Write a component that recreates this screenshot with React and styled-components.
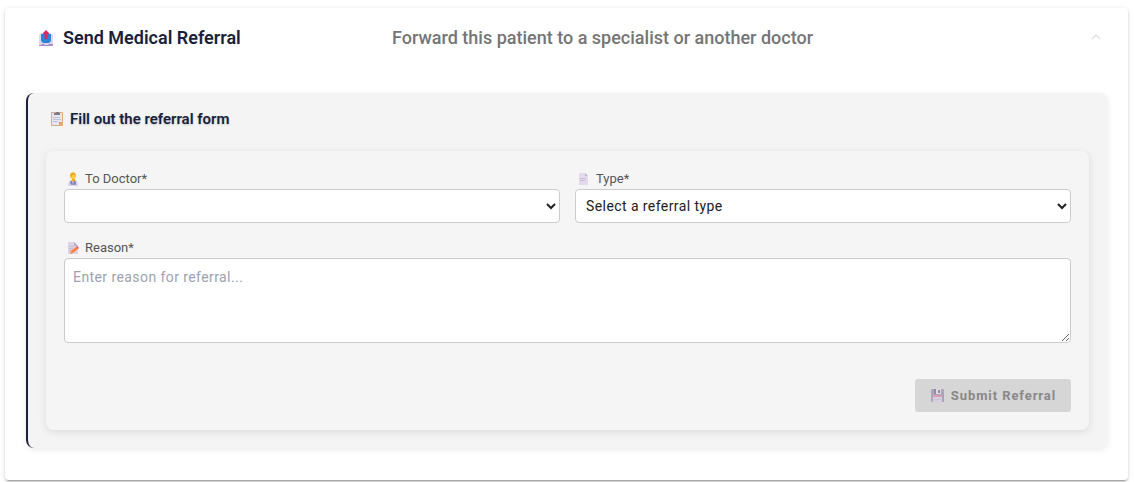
import React, { useState } from "react";
import styled, { createGlobalStyle } from "styled-components";

const GlobalStyle = createGlobalStyle`
  *, *::before, *::after { box-sizing: border-box; }
  body {
    margin: 0;
    background: #fff;
    font-family: Roboto, "Liberation Sans", sans-serif;
  }
`;

const Page = styled.main`
  padding: 8px 6px 2px 5px;
`;

const Panel = styled.section`
  background: #fff;
  border-radius: 4px;
  padding-bottom: 32px;
  box-shadow: 0 3px 1px -2px rgba(0, 0, 0, 0.2), 0 2px 2px rgba(0, 0, 0, 0.14),
    0 1px 5px rgba(0, 0, 0, 0.12);
`;

const PanelHeader = styled.header`
  display: grid;
  grid-template-columns: 354px 1fr auto;
  align-items: center;
  height: 60px;
  padding: 0 27px 0 33px;
`;

const PanelTitle = styled.h1`
  display: flex;
  align-items: center;
  gap: 9px;
  margin: 0;
  font-size: 18px;
  line-height: 24px;
  font-weight: 600;
  color: #1a1f3c;
`;

const PanelDescription = styled.p`
  margin: 0;
  font-size: 18px;
  line-height: 24px;
  font-weight: 500;
  color: #757575;
`;

const Toggle = styled.button`
  display: flex;
  padding: 0;
  border: 0;
  background: none;
  cursor: pointer;
`;

const Section = styled.section`
  margin: 25px 20px 0 21px;
  padding: 16px 19px 18px 18px;
  background: #f4f4f4;
  border-left: 2px solid #1a1f3c;
  border-radius: 8px;
  box-shadow: 0 2px 6px rgba(0, 0, 0, 0.08);
`;

const SectionTitle = styled.h2`
  display: flex;
  align-items: center;
  gap: 6px;
  margin: 0 0 22px;
  padding-left: 4px;
  font-size: 15px;
  line-height: 20px;
  font-weight: 600;
  color: #1a1f3c;
  text-shadow: 0 1px 2px rgba(0, 0, 0, 0.2);
`;

const Form = styled.form`
  display: grid;
  grid-template-columns: 1fr 1fr;
  gap: 15px;
  padding: 18px;
  background: #f5f5f5;
  border-radius: 8px;
  box-shadow: 0 2px 8px rgba(0, 0, 0, 0.1);
`;

const Field = styled.div`
  display: flex;
  flex-direction: column;
  grid-column: ${({ $wide }) => ($wide ? "1 / -1" : "auto")};
`;

const Label = styled.label`
  display: flex;
  align-items: center;
  gap: 5px;
  height: 20px;
  padding-left: 2px;
  font-size: 13px;
  line-height: 20px;
  color: #555;
`;

const Select = styled.select`
  width: 100%;
  height: 34px;
  padding: 0 6px;
  border: 1px solid #ccc;
  border-radius: 4px;
  background: #fff;
  color: #212121;
  font-family: inherit;
  font-size: 14px;
  letter-spacing: 0.03em;
`;

const TextArea = styled.textarea`
  display: block;
  width: 100%;
  height: 85px;
  padding: 8px;
  border: 1px solid #ccc;
  border-radius: 4px;
  background: #fff;
  color: #212121;
  font-family: inherit;
  font-size: 14px;
  line-height: 20px;
  letter-spacing: 0.03em;
  resize: vertical;

  &::placeholder {
    color: #9ca3af;
  }
`;

const Actions = styled.div`
  display: flex;
  justify-content: flex-end;
  grid-column: 1 / -1;
  padding-top: 21px;
`;

const SubmitButton = styled.button`
  display: flex;
  align-items: center;
  gap: 6px;
  height: 33px;
  padding: 0 15px;
  border: 0;
  border-radius: 3px;
  background: #d6d6d6;
  color: #888;
  font-family: inherit;
  font-size: 13px;
  font-weight: 700;
  letter-spacing: 0.07em;
`;

const Icon = styled.svg.attrs({ "aria-hidden": true })`
  display: block;
  flex: none;
  width: ${({ $size }) => $size}px;
  height: ${({ $size }) => $size}px;
`;

const OutboxIcon = () => (
  <Icon $size={16} viewBox="0 0 16 16">
    <path d="M1 5 3 3h10l2 2v6H1z" fill="#d9dbea" />
    <path d="M3 4h10v9H3z" fill="#2a86d4" />
    <path d="M1 11h2l2 2h6l2-2h2v5H1z" fill="#ddd3ea" />
    <path d="M1 15h2l1-1h2l1 1h3l1-1h4v2H1z" fill="#a78fca" />
    <path d="M8 0 11 3v1H9.500v5h-3V4H5V3z" fill="#dc2862" />
  </Icon>
);

const ClipboardIcon = () => (
  <Icon $size={14} viewBox="0 0 14 14">
    <rect x="1" width="12" height="14" rx="1" fill="#e3a878" />
    <path d="M2 1h10v9l-3 3H2z" fill="#eae4f2" />
    <path d="M9 13v-3h3z" fill="#d8935c" />
    <path d="M4 1h2V0h3v1h1v2H4z" fill="#83788b" />
    <path d="M3 5.500h7M3 7.500h8M3 9.500h5" stroke="#c8bed1" />
  </Icon>
);

const DoctorIcon = () => (
  <Icon $size={14} viewBox="0 0 14 14">
    <path d="M2 14c0-3 1-6 3-6h4c2 0 3 3 3 6z" fill="#d9d3e5" />
    <path d="m5 8 2 3 2-3 1 5H5z" fill="#8f97cb" />
    <path d="M6 7h3v2L7.500 10 6 9z" fill="#e9a91d" />
    <circle cx="7" cy="4" r="3" fill="#ffc83d" />
    <path d="M4 4c0-5 6-5 6 0L9 3H6L5 5z" fill="#efaa24" />
    <path d="M5 9v3M9 9v3" stroke="#6873b2" />
  </Icon>
);

const PageIcon = () => (
  <Icon $size={14} viewBox="0 0 14 14">
    <path d="M2 1h6l3 3v9H2z" fill="#e3dbed" />
    <path d="M8 1v3h3z" fill="#c3b7ce" />
    <path d="M3 6.500h6M3 8.500h5" stroke="#c6bbd2" />
  </Icon>
);

const MemoIcon = () => (
  <Icon $size={14} viewBox="0 0 14 14">
    <path d="M2 1h6l4 4v8H2z" fill="#ddd4e6" />
    <path d="M8 1v4h4z" fill="#b9acc5" />
    <path d="M3 5.500h5M3 7.500h4M3 9.500h3" stroke="#c5bad0" />
    <path d="m4 13 1-3 5-4 2 2-5 4z" fill="#ff7f3e" />
    <path d="m10 6 1-1 2 2-1 1z" fill="#e9535c" />
    <path d="m4 13 1-3 2 2z" fill="#e5a875" />
  </Icon>
);

const FloppyIcon = () => (
  <Icon $size={15} viewBox="0 0 15 15">
    <path d="M1 2 2 1h11l1 1v12H2l-1-1z" fill="#aaa4bd" />
    <path d="M5 1h6v5H5z" fill="#ded9e3" />
    <path d="M4 1h2v5H4zM8 2h2v3H8z" fill="#918ba0" />
    <path d="M3 7h9v7H3z" fill="#d7cee0" />
    <path d="M3 7h9v2H3z" fill="#dc9db3" />
    <path d="M4 11.500h7" stroke="#c9c0d2" />
  </Icon>
);

const ChevronIcon = ({ open }) => (
  <Icon $size={10} viewBox="0 0 10 10">
    <path
      d={open ? "M1 6 5 2 9 6" : "M1 3 5 7 9 3"}
      fill="none"
      stroke="#e0e0e0"
      strokeWidth="1.400"
    />
  </Icon>
);

export default function App() {
  const [open, setOpen] = useState(true);
  const [doctor, setDoctor] = useState("");
  const [type, setType] = useState("");
  const [reason, setReason] = useState("");

  return (
    <>
      <GlobalStyle />
      <Page>
        <Panel>
          <PanelHeader>
            <PanelTitle><OutboxIcon />Send Medical Referral</PanelTitle>
            <PanelDescription>Forward this patient to a specialist or another doctor</PanelDescription>
            <Toggle
              type="button"
              aria-label="Toggle referral form"
              aria-expanded={open}
              onClick={() => setOpen(!open)}
            >
              <ChevronIcon open={open} />
            </Toggle>
          </PanelHeader>
          {open && (
            <Section>
              <SectionTitle><ClipboardIcon />Fill out the referral form</SectionTitle>
              <Form onSubmit={(event) => event.preventDefault()}>
                <Field>
                  <Label htmlFor="doctor"><DoctorIcon />To Doctor*</Label>
                  <Select id="doctor" value={doctor} onChange={(e) => setDoctor(e.target.value)}>
                    <option value="" />
                  </Select>
                </Field>
                <Field>
                  <Label htmlFor="type"><PageIcon />Type*</Label>
                  <Select id="type" value={type} onChange={(e) => setType(e.target.value)}>
                    <option value="">Select a referral type</option>
                  </Select>
                </Field>
                <Field $wide>
                  <Label htmlFor="reason"><MemoIcon />Reason*</Label>
                  <TextArea
                    id="reason"
                    placeholder="Enter reason for referral..."
                    value={reason}
                    onChange={(e) => setReason(e.target.value)}
                  />
                </Field>
                <Actions>
                  <SubmitButton type="submit" disabled={!doctor || !type || !reason}>
                    <FloppyIcon />Submit Referral
                  </SubmitButton>
                </Actions>
              </Form>
            </Section>
          )}
        </Panel>
      </Page>
    </>
  );
}
